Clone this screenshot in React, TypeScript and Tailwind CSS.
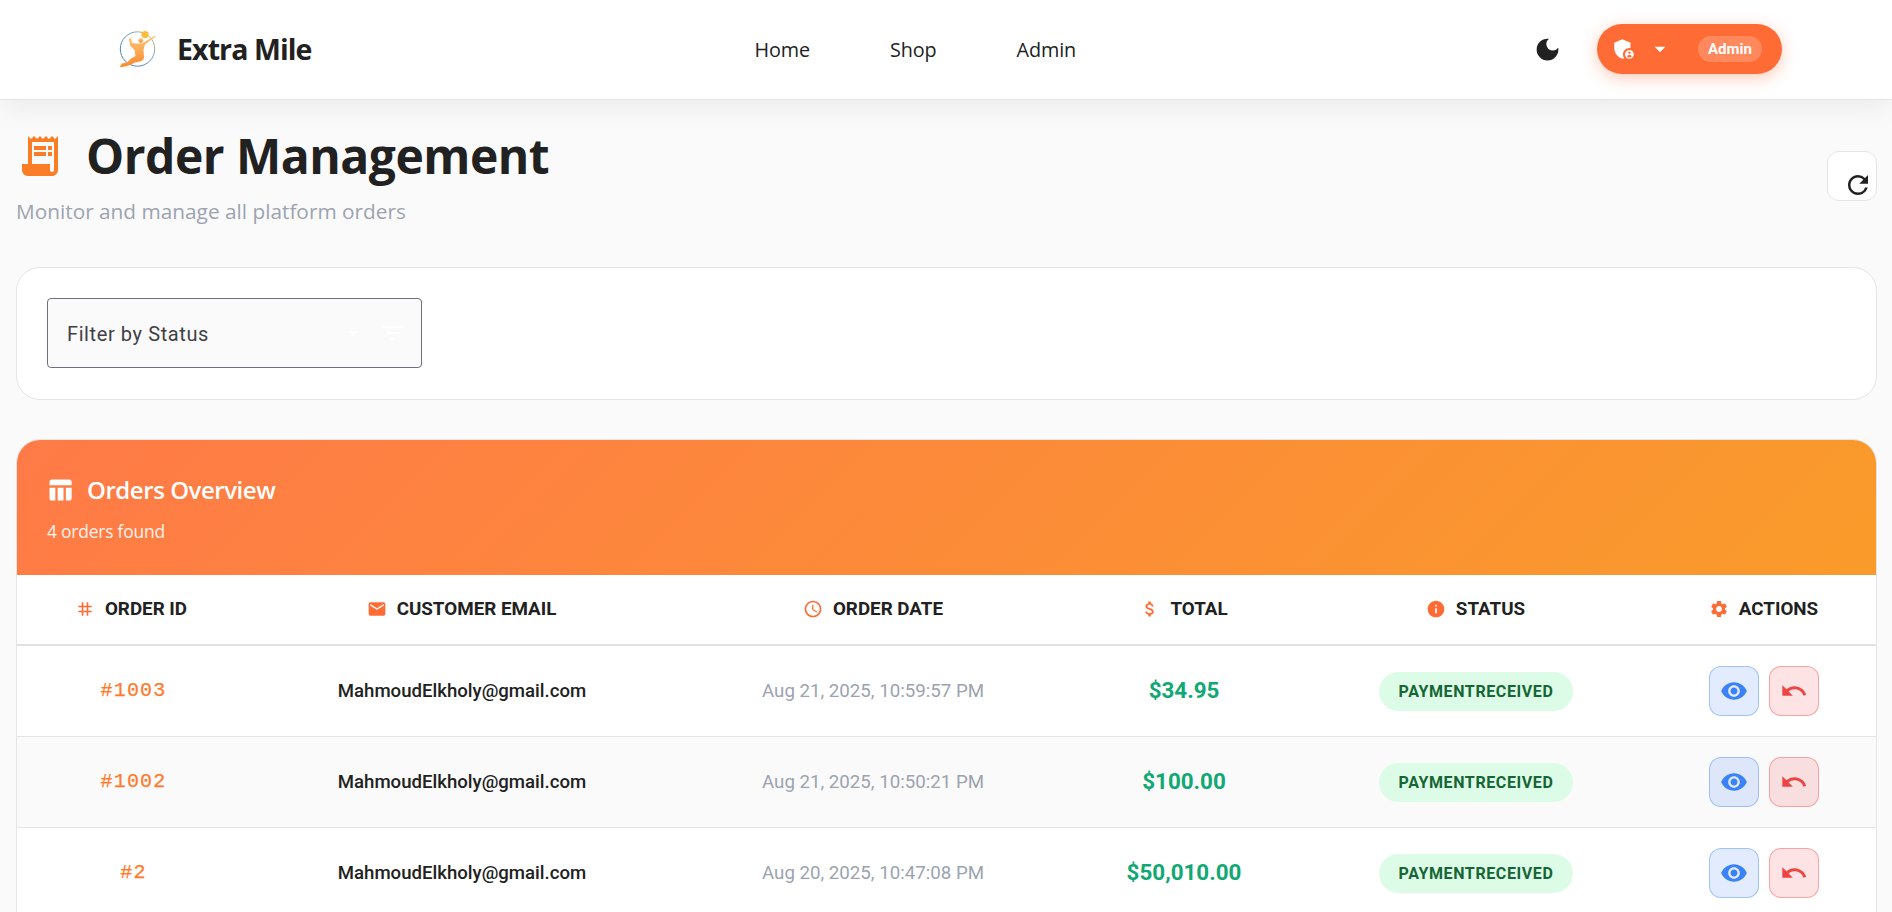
import React from "react";
import {
  MdAccessTime,
  MdAdminPanelSettings,
  MdArrowDropDown,
  MdAttachMoney,
  MdDarkMode,
  MdEmail,
  MdFilterList,
  MdInfo,
  MdReceiptLong,
  MdRefresh,
  MdSettings,
  MdTableChart,
  MdTag,
  MdUndo,
  MdVisibility,
} from "react-icons/md";

const orders = [
  { id: "#1003", email: "MahmoudElkholy@gmail.com", date: "Aug 21, 2025, 10:59:57 PM", total: "$34.95" },
  { id: "#1002", email: "MahmoudElkholy@gmail.com", date: "Aug 21, 2025, 10:50:21 PM", total: "$100.00" },
  { id: "#2", email: "MahmoudElkholy@gmail.com", date: "Aug 20, 2025, 10:47:08 PM", total: "$50,010.00" },
];

export default function App() {
  return (
    <div className="h-screen overflow-hidden bg-[#fafafa] font-['Roboto',sans-serif] text-[#212121]">
      <Navbar />
      <main className="pl-4 pr-[15px]">
        <PageHeader />

        {/* filter */}
        <section className="mt-[41px] h-[133px] rounded-[24px] border border-[#e5e5e5] bg-white pl-[30px] pt-[30px]">
          <div className="flex h-[70px] w-[375px] items-center rounded-[4px] border border-[#6f6f7d] bg-[#fafafa] pl-[19px] pr-[14px]">
            <span className="flex-1 pt-[2px] text-[20px] tracking-[0.6px] text-[#3f3f46]">Filter by Status</span>
            <MdArrowDropDown className="mr-[14px] text-white" size={24} />
            <MdFilterList className="text-white" size={28} />
          </div>
        </section>

        {/* orders */}
        <section className="mt-[39px] overflow-hidden rounded-t-[24px] border border-[#e5e5e5] bg-white">
          <div className="h-[135px] bg-[linear-gradient(135deg,#ff7a47,#f99b2a)] pl-[30px] pt-[30px] text-white">
            <div className="flex h-[40px] items-center font-['Open_Sans',sans-serif] text-[24px] font-semibold tracking-[-0.45px]">
              <MdTableChart className="ml-[-1px] mr-[13px]" size={28} />
              Orders Overview
            </div>
            <div className="mt-[8px] font-['Open_Sans',sans-serif] text-[17.4px] tracking-[-0.2px] opacity-90">4 orders found</div>
          </div>
          <OrdersTable />
        </section>
      </main>
    </div>
  );
}

function Navbar() {
  return (
    <header className="relative z-10 flex h-[100px] items-center border-b border-[#e5e5e5] bg-white pl-[118px] pr-[110px] shadow-[0_4px_30px_rgba(0,0,0,0.08)]">
      <Logo />
      <span className="ml-[19px] font-['Open_Sans',sans-serif] text-[28.5px] font-bold tracking-[-0.9px]">Extra Mile</span>

      <nav className="ml-[443px] flex gap-[80px] font-['Open_Sans',sans-serif] text-[19.8px] font-medium tracking-[-0.1px]">
        <a>Home</a>
        <a>Shop</a>
        <a>Admin</a>
      </nav>

      <MdDarkMode className="ml-auto mr-[35px]" size={29} />
      <button className="mb-[2px] flex h-[50px] w-[185px] items-center rounded-full bg-[#ff6b35] pl-[14px] text-white shadow-[0_4px_16px_rgba(255,107,53,0.35)]">
        <MdAdminPanelSettings size={26} />
        <MdArrowDropDown className="ml-[10px]" size={26} />
        <span className="ml-[25px] rounded-full bg-white/20 px-[10px] py-[3px] text-[15px] leading-[20px] font-bold">Admin</span>
      </button>
    </header>
  );
}

function Logo() {
  return (
    <svg width="40" height="40" viewBox="0 0 40 40" className="shrink-0">
      <defs>
        <linearGradient id="ring" x1="0" y1="1" x2="1" y2="0">
          <stop offset="0" stopColor="#3b78c4" />
          <stop offset="0.6" stopColor="#6d9ac0" />
          <stop offset="1" stopColor="#f2c14e" />
        </linearGradient>
        <linearGradient id="body" x1="0" y1="0" x2="0" y2="1">
          <stop offset="0" stopColor="#fbc779" />
          <stop offset="1" stopColor="#fb8a2c" />
        </linearGradient>
      </defs>
      <circle cx="19.5" cy="19" r="17.2" fill="none" stroke="url(#ring)" strokeWidth="1" />
      <circle cx="27" cy="4.6" r="3.6" fill="#fdbb3d" />
      <circle cx="22.8" cy="10.6" r="2.4" fill="url(#body)" />
      <path
        d="M37 5.6 L37.6 6.6 L27 14.5 L25.5 20 L26 27 C26 31 22 31.5 17 32.5 L14 34 C11.5 35.5 7 36.6 1.5 37.4 L4 33.5 L9 32.5 L13 28.5 L17.5 26 L16.5 20 L12 15.5 L11 9 L13 7.5 L14 13 L18 13.5 L24 13.6 Z"
        fill="url(#body)"
      />
    </svg>
  );
}

function PageHeader() {
  return (
    <div className="flex items-start justify-between">
      <div>
        <div className="mt-[32px] flex h-[48px] items-center">
          <MdReceiptLong className="text-[#fb7e26]" size={48} />
          <h1 className="ml-[22px] font-['Open_Sans',sans-serif] text-[48px] leading-[48px] font-bold tracking-[-0.5px]">Order Management</h1>
        </div>
        <p className="mt-[16px] font-['Open_Sans',sans-serif] text-[20.8px] leading-[30px] text-[#9ca3af]">Monitor and manage all platform orders</p>
      </div>
      <button className="mt-[51px] flex h-[50px] w-[50px] items-end justify-end rounded-[12px] border border-[#e5e5e5] bg-white pb-[0px] pr-[3px]">
        <MdRefresh size={30} />
      </button>
    </div>
  );
}

function OrdersTable() {
  const heads = [
    { label: "ORDER ID", icon: <MdTag size={20} />, w: "w-[233px] pr-[5px]" },
    { label: "CUSTOMER EMAIL", icon: <MdEmail size={20} />, w: "w-[424px] pr-[1px]" },
    { label: "ORDER DATE", icon: <MdAccessTime size={20} />, w: "w-[398px]" },
    { label: "TOTAL", icon: <MdAttachMoney size={20} />, w: "w-[224px]" },
    { label: "STATUS", icon: <MdInfo size={20} />, w: "w-[360px] pr-[1px]" },
    { label: "ACTIONS", icon: <MdSettings size={20} />, w: "w-[221px] pr-[6px]" },
  ];

  return (
    <table className="w-full table-fixed border-collapse">
      <thead>
        <tr className="h-[70px] border-b-[2px] border-[#e0e0e0]">
          {heads.map((h) => (
            <th key={h.label} className={`pb-[1px] ${h.w}`}>
              <span className="flex items-center justify-center gap-[10px] text-[18.8px] font-bold text-[#212121]">
                <span className="text-[#ff6b35]">{h.icon}</span>
                {h.label}
              </span>
            </th>
          ))}
        </tr>
      </thead>
      <tbody>
        {orders.map((o, i) => (
          <tr key={o.id} className={`h-[91px] border-b border-[#e5e5e5] text-center ${i % 2 === 1 ? "bg-[#fafafa]" : "bg-white"}`}>
            <td className="pt-[1px] font-['Liberation_Mono',monospace] text-[20px] tracking-[1.2px] text-[#ff7a2b] [-webkit-text-stroke:0.25px_#ff7a2b]">{o.id}</td>
            <td className="pt-[2px] text-[18.6px] font-medium text-[#212121]">{o.email}</td>
            <td className="pt-[1px] text-[18.7px] text-[#9ca3af]">{o.date}</td>
            <td className="pt-[1px] text-[22.4px] font-bold text-[#10a874]">{o.total}</td>
            <td className="pt-[2px]">
              <span className="inline-block h-[39px] w-[194px] rounded-full bg-[#dcfce7] text-[16px] leading-[39px] font-bold tracking-[0.6px] text-[#166534]">PAYMENTRECEIVED</span>
            </td>
            <td>
              <div className="flex justify-center gap-[10px] pr-[5px]">
                <button className="flex h-[50px] w-[50px] items-center justify-center rounded-[12px] border border-[#3b82f6]/40 bg-[#3b82f6]/15 text-[#3b82f6]">
                  <MdVisibility size={28} />
                </button>
                <button className="flex h-[50px] w-[50px] items-center justify-center rounded-[12px] border border-[#ef4444]/40 bg-[#ef4444]/15 text-[#ef4444]">
                  <MdUndo size={28} />
                </button>
              </div>
            </td>
          </tr>
        ))}
      </tbody>
    </table>
  );
}
